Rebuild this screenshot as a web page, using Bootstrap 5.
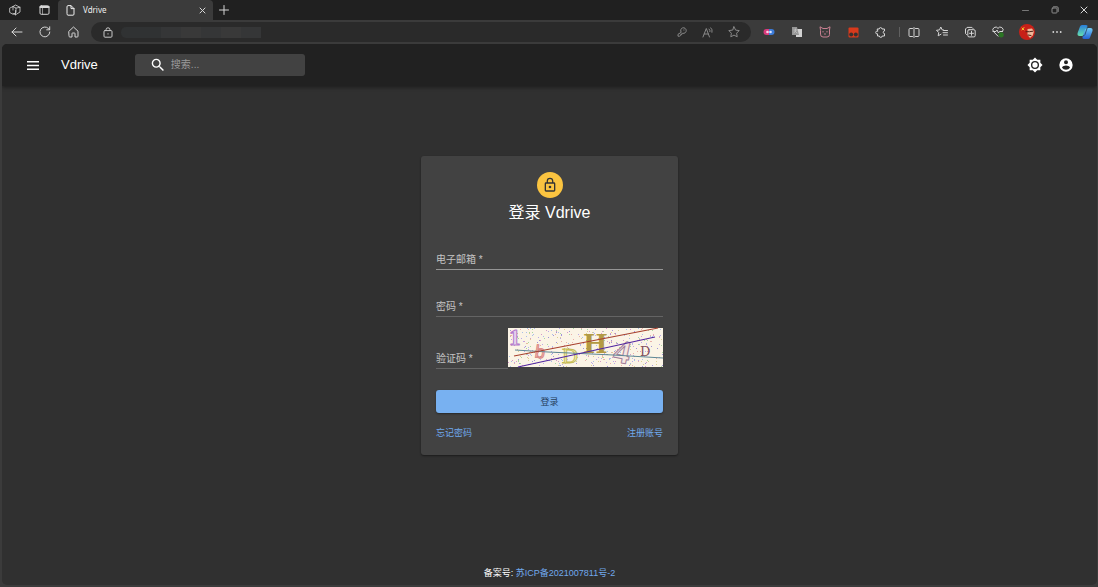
<!DOCTYPE html>
<html lang="zh-CN" data-bs-theme="dark">
<head>
<meta charset="utf-8">
<meta name="viewport" content="width=device-width, initial-scale=1">
<title>Vdrive</title>
<link href="https://cdn.jsdelivr.net/npm/bootstrap@5.3.0/dist/css/bootstrap.min.css" rel="stylesheet">
<style>
  body { background: #3b3b3b; color: #fff; font-family: "Liberation Sans", "Noto Sans CJK SC", sans-serif; font-size: 10px; line-height: 14px; }
  svg { display: block; fill: none; stroke: currentColor; stroke-width: 1; stroke-linecap: round; stroke-linejoin: round; flex: none; }
  button, input { font: inherit; color: inherit; background: none; border: 0; padding: 0; outline-offset: -1px; }
  a { text-decoration: none; color: #70a9ed; }
  .fill { fill: currentColor; stroke: none; }
  .colored { stroke: none; }
  .cat { color: #c98092; }
  .bright { color: #c8c8c8; }
  .dim { color: #888; }

  .tab-strip { height: 20px; background: #202020; color: #ddd; }
  .tool { width: 28px; height: 20px; display: flex; align-items: center; justify-content: center; flex: none; color: #d6d6d6; }
  .tool-wide { width: 30px; }
  .tool-end { width: 26px; }
  .tab-page { width: 155px; height: 20px; background: #3b3b3b; border-radius: 4px 4px 0 0; font-family: "Noto Sans", "Noto Sans CJK SC", sans-serif; font-size: 8px; line-height: 12px; color: #eee; }
  .tab-new { width: 22px; }
  .toolbar { height: 24px; padding-left: 3px; }
  .address { height: 20px; background: #2a2a2a; border-radius: 10px; }
  .address .tool { width: 26px; color: #888; }
  .address input { width: 20px; }
  .masked { width: 140px; height: 11px; overflow: hidden; border-radius: 5px 0 0 5px; }
  .masked i { flex: 1; background: #353637; }
  .masked i:nth-child(even) { background: #393939; }
  .masked i:nth-child(-n+2) { background: #303233; }
  .split { width: 5px; height: 10px; border-right: 1px solid #606060; }

  .page { margin: 0 1px 2px 2px; background: #303030; border-radius: 5px; overflow: hidden; }
  .app-bar { height: 42px; background: #212121; box-shadow: 0 1px 4px rgba(0,0,0,.45); padding: 0 16px 0 15px; }
  .app-bar .tool { width: 31px; height: 31px; color: #fff; }
  .brand { font-size: 13px; line-height: 20px; margin-left: 13px; }
  .search { width: 170px; height: 22px; background: #424242; border-radius: 3px; margin-left: 37px; padding-left: 16px; gap: 6px; }
  .search input::placeholder { color: #9a9a9a; opacity: 1; }

  .login { width: 257px; margin-top: 70px; padding: 16px 15px 15px; background: #424242; border-radius: 3px; box-shadow: 0 1px 2px rgba(0,0,0,.45); }
  .avatar { width: 26px; height: 26px; background: #fbc440; color: #333; }
  h1 { font-size: 16px; line-height: 24px; margin: 3px 0 25px; }
  .field { height: 20px; border-bottom: 1px solid #646464; color: #c4c4c4; }
  .field-active { border-color: #959595; }
  .password-row { margin-top: 27px; }
  .captcha-row { height: 41px; margin-top: 11px; }
  .captcha { width: 155px; height: 39px; overflow: visible; stroke-linecap: butt; }
  .submit { height: 23px; margin-top: 21px; background: #78b1f1; color: #27405c; border-radius: 3px; font-size: 9px; box-shadow: 0 1px 2px rgba(0,0,0,.4); }
  .links { margin-top: 13px; font-size: 9px; }
  footer { font-size: 9px; padding-bottom: 5px; }
</style>
</head>
<body class="d-flex flex-column min-vh-100">

<header>
  <div class="tab-strip d-flex align-items-center">
    <button class="tool tool-wide" aria-label="Workspaces"><svg width="12" height="12" viewBox="0 0 12 12"><g stroke-width=".8"><path d="M4 2.500 6.500 1 11 3.300V8L6.500 10.800 4 9.500M1 4l3-1.500 3 1.600v4.600L4 10.300 1 8.600zM7 4.100 11 3.300M6.500 10.800V6.500M4 2.500V6"/></g></svg></button>
    <button class="tool" aria-label="Tab actions"><svg width="11" height="10" viewBox="0 0 11 10"><rect x="1" y=".8" width="9" height="8.500" rx="1.200"/><path d="M1.500 2h8" stroke-width="2.200"/><path d="M3.500 3v6" stroke-width=".6"/></svg></button>
    <div class="tab-page d-flex align-items-center ps-2">
      <svg width="9" height="11" viewBox="0 0 9 11"><path d="M1 1.500Q1 .6 2 .6h3l3 3V9q0 1.200-1 1.200H2Q1 10.200 1 9zM5 .8V3.600h3"/></svg>
      <span class="ms-2 flex-grow-1">Vdrive</span>
      <button class="tool tab-new" aria-label="Close tab"><svg width="7" height="7" viewBox="0 0 7 7"><path d="m1 1 5 5M6 1 1 6"/></svg></button>
    </div>
    <button class="tool tab-new me-auto" aria-label="New tab"><svg width="10" height="10" viewBox="0 0 10 10"><path d="M5 .5v9M.5 5h9"/></svg></button>
    <button class="tool tool-wide dim" aria-label="Minimize"><svg width="7" height="7" viewBox="0 0 7 7"><path d="M.5 3.500h6" stroke="#777"/></svg></button>
    <button class="tool tool-wide" aria-label="Restore"><svg width="8" height="8" viewBox="0 0 8 8"><g stroke="#999" stroke-width=".9"><rect x="1" y="2" width="5" height="5" rx=".8"/><path d="M2.500.8H6Q7.200.8 7.200 2v3.500"/></g></svg></button>
    <button class="tool" aria-label="Close"><svg width="8" height="8" viewBox="0 0 8 8"><path d="m1 1 6 6M7 1 1 7"/></svg></button>
  </div>

  <div class="toolbar d-flex align-items-center">
    <div class="d-flex pe-1">
      <button class="tool" aria-label="Back"><svg width="12" height="10" viewBox="0 0 12 10"><path d="M11 5H1M5 1 1 5l4 4"/></svg></button>
      <button class="tool" aria-label="Reload"><svg width="12" height="12" viewBox="0 0 12 12"><path d="M10.800 6A4.900 4.900 0 1 1 9.300 2.400L10.600 3.500M10.700.8v3h-3"/></svg></button>
      <button class="tool" aria-label="Home"><svg width="11" height="12" viewBox="0 0 11 12"><path d="M1 5.200 5.500 1 10 5.200v5Q10 11 9.200 11H7V7.500Q7 7 6.500 7h-2Q4 7 4 7.500V11H1.800Q1 11 1 10.200z"/></svg></button>
    </div>
    <div class="address d-flex align-items-center flex-grow-1 ps-1 pe-1">
      <button class="tool" aria-label="Site information"><svg class="bright" width="10" height="11" viewBox="0 0 10 11"><rect x="1" y="3.600" width="8" height="6.600" rx="1"/><path d="M3 3.500V2.800a2 2 0 0 1 4 0v.7M5 6.700v.4"/></svg></button>
      <div class="masked d-flex" aria-hidden="true"><i></i><i></i><i></i><i></i><i></i><i></i><i></i></div>
      <input class="flex-grow-1" type="text" aria-label="Address">
      <button class="tool" aria-label="Passwords"><svg width="10" height="10" viewBox="0 0 10 10"><path d="M4 5A2.800 2.800 0 1 1 5.800 6.300L4.800 6.500V7.500H3.700v1L2.500 9.200H1V7.700zM6.800 3h.2"/></svg></button>
      <button class="tool" aria-label="Read aloud"><svg width="12" height="11" viewBox="0 0 12 11"><path d="M1 10 4.300 1.500 7.500 10M2.200 7h4.200M7 2q1.500 1 1 2.600M8.800.8q2 1.600 1.200 4.500"/></svg></button>
      <button class="tool" aria-label="Favorite"><svg width="12" height="12" viewBox="0 0 12 12"><path d="m6 .8 1.600 3.300 3.600.5-2.600 2.600.6 3.600L6 9.100 2.800 10.800l.6-3.600L.8 4.600l3.600-.5z"/></svg></button>
    </div>
    <div class="d-flex align-items-center ps-1">
      <button class="tool" aria-label="Pill extension"><svg class="colored" width="12" height="8" viewBox="0 0 12 8"><path d="M6 1H3.500a3 3 0 0 0 0 6H6z" fill="#d83a7c"/><path d="M6 1h2.500a3 3 0 0 1 0 6H6z" fill="#3b7bd8"/><circle cx="4.500" cy="4" r="1.300" fill="#f7d7e8"/><circle cx="7.500" cy="4" r="1.300" fill="#e0e6ff"/></svg></button>
      <button class="tool" aria-label="Translate"><svg class="colored" width="10" height="10" viewBox="0 0 10 10"><rect x="4" y="2" width="6" height="8" fill="#d2d2d2"/><path d="M0 0h5l2 8H0z" fill="#969696"/><path d="M2 3h3M3.500 2v1.500L2 6M3 4l2 2" stroke="#ccc" stroke-width=".6"/></svg></button>
      <button class="tool" aria-label="Cat extension"><svg class="cat" width="12" height="12" viewBox="0 0 12 12"><path d="m1.500 4L1 .8 4 2.500h4L11 .8l-.5 3.200v4.500Q10.500 11 8 11H4Q1.500 11 1.500 8.500z"/><path d="M4 5.500v.5M8 5.500v.5M5.500 8h1"/></svg></button>
      <button class="tool" aria-label="Script extension"><svg class="colored" width="11" height="11" viewBox="0 0 11 11"><rect x=".5" y=".5" width="10" height="10" rx="1" fill="#d93a1c"/><circle cx="3.200" cy="7.500" r="2" fill="#3a302e"/><circle cx="7.800" cy="7.500" r="2" fill="#3a302e"/></svg></button>
      <button class="tool" aria-label="Extensions"><svg width="12" height="12" viewBox="0 0 12 12"><path d="M2.500 3h1.700a1.400 1.400 0 1 1 2.800 0h2.500v2a1.200 1.200 0 0 0 0 2.600V10H7.200a1.400 1.400 0 0 1-2.800 0H2.500V7.800a1.400 1.400 0 1 1 0-2.700z"/></svg></button>
      <span class="split"></span>
      <button class="tool" aria-label="Split screen"><svg width="12" height="11" viewBox="0 0 12 11"><path d="M4.500 1.500H2Q1 1.500 1 2.500v6q0 1 1 1h2.500M7.500 1.500H10q1 0 1 1v6q0 1-1 1H7.500M6 .5v10"/></svg></button>
      <button class="tool" aria-label="Favorites"><svg width="12" height="12" viewBox="0 0 12 12"><path d="M7.500 4 6.200 3.900 4.800 1 3.500 3.900l-3 .4 2.200 2.200-.5 3.300L5 8.200M7.500 4.500h4M7 6.700h4.500M7.500 9h4"/></svg></button>
      <button class="tool" aria-label="Collections"><svg width="12" height="12" viewBox="0 0 12 12"><path d="M2.500 8.500 1.500 7.600V3l1.600-1.600h4.800L9 2.500"/><rect x="3.800" y="3.700" width="7.400" height="7.200" rx="1.300"/><path d="M7.500 5.300v4M5.500 7.300h4"/></svg></button>
      <button class="tool" aria-label="Browser essentials"><svg width="13" height="12" viewBox="0 0 13 12"><path d="M6 10.200 1.300 5.400a2.700 2.700 0 0 1 4.700-3 2.700 2.700 0 0 1 4.700 3M1 5.500h3L5 4l1.500 3 1-1.500h3"/><circle cx="9.200" cy="8.800" r="2.600" fill="#2b7624" stroke="none"/></svg></button>
      <button class="tool tool-wide" aria-label="Profile"><svg class="colored" width="16" height="16" viewBox="0 0 16 16"><circle cx="8" cy="8" r="8" fill="#c82018"/><path d="m3 4 2 2M5 3.500 3 6" stroke="#f5c42c"/><path d="M8.500 5 13 4.500l2 3-1.300 4L11 14l-2.500-3z" fill="#efb89a"/><path d="M7 7.700h3.500l3.500-.5M9 11l3 .5" stroke="#502018"/></svg></button>
      <button class="tool tool-wide" aria-label="Settings and more"><svg class="fill" width="10" height="4" viewBox="0 0 10 4"><circle cx="1.300" cy="2" r=".9"/><circle cx="5" cy="2" r=".9"/><circle cx="8.700" cy="2" r=".9"/></svg></button>
      <button class="tool tool-end" aria-label="Copilot"><svg class="colored" width="16" height="16" viewBox="0 0 16 16"><defs><linearGradient id="c1" x2="0" y2="1"><stop stop-color="#2a80dc"/><stop offset="1" stop-color="#65dfae"/></linearGradient><linearGradient id="c2" x2="0" y2="1"><stop stop-color="#72cdf7"/><stop offset="1" stop-color="#2461d4"/></linearGradient></defs><path d="M5 1h4q2 0 1.500 2L8 10.500Q7.300 12 6 12H2.500Q0 12 .6 9L3 2.500Q3.500 1 5 1z" fill="url(#c1)"/><path d="M11 4h2.500q2.500 0 2 3L13 13.500Q12.500 15 11 15H7Q5 15 5.500 13L8 5.500Q8.500 4 11 4z" fill="url(#c2)"/><path d="M10.500 3 8 10.500Q7.300 12 6 12" stroke="#24425c" stroke-width=".8"/></svg></button>
    </div>
  </div>
</header>

<div class="page d-flex flex-column flex-grow-1">
  <nav class="app-bar d-flex align-items-center">
    <button class="tool" aria-label="菜单"><svg class="fill" width="12" height="9" viewBox="0 0 12 9"><path d="M0 0h12v1.500H0zM0 3.700h12v1.500H0zM0 7.400h12v1.500H0z"/></svg></button>
    <span class="brand">Vdrive</span>
    <div class="search d-flex align-items-center">
      <svg class="fill" width="14" height="14" viewBox="2 2 20 20"><path d="M15.500 14h-.79l-.28-.27A6.471 6.471 0 0 0 16 9.500 6.500 6.500 0 1 0 9.500 16c1.610 0 3.090-.59 4.230-1.570l.27.28v.79l5 4.990L20.490 19l-4.990-5zm-6 0C7.010 14 5 11.990 5 9.500S7.010 5 9.500 5 14 7.010 14 9.500 11.990 14 9.500 14z"/></svg>
      <input class="w-100" type="search" placeholder="搜索..." aria-label="搜索">
    </div>
    <button class="tool ms-auto" aria-label="切换主题"><svg class="fill" width="16" height="16" viewBox="0 0 24 24"><path fill-rule="evenodd" d="M20 8.690V4h-4.690L12 .69 8.690 4H4v4.690L.69 12 4 15.310V20h4.690L12 23.310 15.310 20H20v-4.690L23.310 12 20 8.690zM12 18a6 6 0 1 1 0-12 6 6 0 0 1 0 12zm0-10a4 4 0 1 0 0 8 4 4 0 0 0 0-8z"/></svg></button>
    <button class="tool" aria-label="账号"><svg class="fill" width="16" height="16" viewBox="0 0 24 24"><path d="M12 2a10 10 0 1 0 0 20 10 10 0 0 0 0-20zm0 3a3 3 0 1 1 0 6 3 3 0 0 1 0-6zm0 14.200A7.200 7.200 0 0 1 6 15.980c.03-1.990 4-3.080 6-3.080s5.970 1.090 6 3.080a7.200 7.200 0 0 1-6 3.220z"/></svg></button>
  </nav>

  <main class="flex-grow-1 px-2">
    <form class="login mx-auto">
      <div class="avatar rounded-circle mx-auto d-flex align-items-center justify-content-center">
        <svg class="fill" width="16" height="16" viewBox="0 0 24 24"><path fill-rule="evenodd" d="M12 17a2 2 0 1 0 0-4 2 2 0 0 0 0 4zm6-9h-1V6A5 5 0 0 0 7 6v2H6a2 2 0 0 0-2 2v10c0 1.100.9 2 2 2h12a2 2 0 0 0 2-2V10a2 2 0 0 0-2-2zM8.900 6a3.100 3.100 0 0 1 6.200 0v2H8.900zM18 20H6V10h12z"/></svg>
      </div>
      <h1 class="text-center fw-normal">登录 Vdrive</h1>
      <div class="field field-active d-flex align-items-center">
        <label for="email">电子邮箱 *</label><input id="email" class="flex-grow-1" type="email" required>
      </div>
      <div class="field password-row d-flex align-items-center">
        <label for="password">密码 *</label><input id="password" class="flex-grow-1" type="password" required>
      </div>
      <div class="captcha-row d-flex">
        <div class="field d-flex align-items-center align-self-end flex-grow-1">
          <label for="code" class="text-nowrap">验证码 *</label><input id="code" class="w-100" type="text" required>
        </div>
        <svg class="captcha" viewBox="0 0 155 39" role="img" aria-label="验证码">
          <rect width="155" height="39" fill="#fbf4e6" stroke="none"/>
          <g id="specks" stroke="none"></g>
          <text x="1" y="17" font-family="Liberation Serif" font-weight="bold" font-size="23" fill="#e7d3ee" stroke="#b47ccc">1</text>
          <text x="27" y="30" font-family="Liberation Sans" font-size="18" fill="#f2bcb4" stroke="#dc8c88" transform="rotate(8 32 24)">b</text>
          <text x="54" y="35" font-family="Liberation Serif" font-size="22" fill="#f4efc4" stroke="#c8bd56">D</text>
          <text x="78" y="25" font-family="DejaVu Serif" font-weight="bold" font-size="26" fill="#b39a43" stroke="none" transform="translate(-3)">H</text>
          <text x="106" y="35" font-family="Liberation Serif" font-weight="bold" font-size="33" fill="#f5e7e2" stroke="#a3809a" transform="rotate(12 115 25)">4</text>
          <text x="132" y="28" font-family="DejaVu Serif" font-size="13" fill="#85505c" stroke="none">D</text>
          <path d="M7 22 40 24 105 27 155 30" stroke="#5d8795"/>
          <path d="M6 28 150 0" stroke="#a7402e" stroke-width="1.200"/>
          <path d="M10 39 147 9" stroke="#5126a0" stroke-width="1.200"/>
        </svg>
      </div>
      <button class="submit w-100 d-block" type="submit">登录</button>
      <div class="links d-flex justify-content-between"><a href="#">忘记密码</a><a href="#">注册账号</a></div>
    </form>
  </main>

  <footer class="text-center">备案号: <a href="#">苏ICP备2021007811号-2</a></footer>
</div>

<script>
  // Scatter coloured noise behind the captcha letters with a fixed seed.
  const layer = document.getElementById('specks');
  const hues = ['#b9a8e8', '#a8d8a0', '#eab0a8', '#a9bfe8', '#dccf90', '#9f94d8', '#d69ac8'];
  let seed = 11;
  const next = n => (seed = (seed * 1103515245 + 12345) % 2147483648) / 2147483648 * n;
  for (let i = 0; i < 420; i++) {
    const r = document.createElementNS('http://www.w3.org/2000/svg', 'rect');
    r.setAttribute('x', Math.floor(next(155)));
    r.setAttribute('y', Math.floor(next(39)));
    r.setAttribute('width', 1);
    r.setAttribute('height', 1);
    r.setAttribute('fill', hues[Math.floor(next(hues.length))]);
    layer.appendChild(r);
  }
</script>
<script src="https://cdn.jsdelivr.net/npm/bootstrap@5.3.0/dist/js/bootstrap.bundle.min.js"></script>
</body>
</html>
